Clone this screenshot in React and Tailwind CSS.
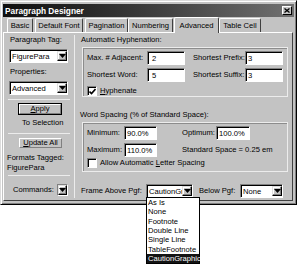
import React from "react";

const Arrow = () => (
  <svg width="7" height="4" viewBox="0 0 7 4" className="block">
    <path d="M0 0h7L3.5 4z" fill="#000" />
  </svg>
);

function DropBtn({ className = "" }) {
  return (
    <div
      className={`flex items-center justify-center bg-[#c3c3c3] border border-t-[#dfdfdf] border-l-[#dfdfdf] border-r-black border-b-black shadow-[inset_-1px_-1px_0_#808080,inset_1px_1px_0_#fff] ${className}`}
    >
      <Arrow />
    </div>
  );
}

function Select({ value, className = "" }) {
  return (
    <div
      className={`flex h-[14px] shrink-0 bg-white border border-t-[#808080] border-l-[#808080] border-r-white border-b-white shadow-[inset_1px_1px_0_#000] ${className}`}
    >
      <div className="flex-1 overflow-hidden whitespace-nowrap pl-[2px] pt-[1px] leading-[11px]">{value}</div>
      <DropBtn className="w-[10px] h-[10px] mt-[1px]" />
    </div>
  );
}

function Input({ value, className = "" }) {
  return (
    <div
      className={`h-[14px] shrink-0 bg-white border border-t-[#808080] border-l-[#808080] border-r-white border-b-white shadow-[inset_1px_1px_0_#000] pt-[1px] leading-[11px] ${className}`}
    >
      {value}
    </div>
  );
}

function Check({ checked }) {
  return (
    <div className="w-[10px] h-[10px] shrink-0 bg-white border border-t-[#808080] border-l-[#808080] border-r-white border-b-white shadow-[inset_1px_1px_0_#000] flex items-center justify-center">
      {checked && (
        <svg width="7" height="7" viewBox="0 0 7 7" className="block">
          <path d="M0.5 3.5L2.5 5.5L6.5 1" stroke="#000" strokeWidth="1.6" fill="none" />
        </svg>
      )}
    </div>
  );
}

function Tab({ label, className = "", active }) {
  return (
    <div
      className={`shrink-0 flex items-center justify-center border-t border-l border-r border-t-white border-l-white border-r-[#404040] rounded-t-[2px] leading-[10px] ${
        active ? "h-[16px] relative z-10 -mb-px bg-[#c3c3c3]" : "h-[14px] bg-[#c3c3c3]"
      } ${className}`}
    >
      {label}
    </div>
  );
}

function Sep({ className = "" }) {
  return <div className={`h-px bg-[#ececec] shrink-0 ${className}`} />;
}

function Button({ children, className = "" }) {
  return (
    <div className={`flex items-center justify-center bg-[#c3c3c3] border border-black shrink-0 ${className}`}>
      <div className="w-full h-full flex items-center justify-center border border-t-white border-l-white border-r-[#808080] border-b-[#808080] leading-[10px]">
        {children}
      </div>
    </div>
  );
}

export default function App() {
  return (
    <div className="relative w-[300px] h-[266px] bg-white text-black text-[7.6px] leading-[10px] font-['Liberation_Sans',Arial,sans-serif]">
      <div className="w-[297px] h-[205px] bg-[#c3c3c3] border border-t-[#dcdcdc] border-l-[#dcdcdc] border-r-black border-b-black shadow-[inset_1px_1px_0_#fff,inset_-1px_-1px_0_#808080] px-[2px] pt-[3px] pb-[3px] flex flex-col">
        {/* Title bar */}
        <div className="h-[13px] shrink-0 bg-gradient-to-r from-[#0f0f0f] to-[#717171] flex items-center justify-between pl-[2px] pr-[2px]">
          <span className="text-white font-bold text-[8.3px] leading-[10px]">Paragraph Designer</span>
          <div className="w-[10px] h-[9px] bg-[#c3c3c3] border border-t-white border-l-white border-r-black border-b-black flex items-center justify-center">
            <svg width="6" height="5" viewBox="0 0 6 5" className="block">
              <path d="M0.5 0.5L5.5 4.5M5.5 0.5L0.5 4.5" stroke="#000" strokeWidth="1.3" />
            </svg>
          </div>
        </div>

        {/* Tabs */}
        <div className="flex items-end h-[15px] pl-[4px] shrink-0">
          <Tab label="Basic" className="w-[26px]" />
          <Tab label="Default Font" className="w-[48px] ml-[2px]" />
          <Tab label="Pagination" className="w-[43px] ml-[2px]" />
          <Tab label="Numbering" className="w-[45px]" />
          <Tab label="Advanced" className="w-[45px] ml-[1px]" active />
          <Tab label="Table Cell" className="w-[42px]" />
        </div>

        {/* Panel */}
        <div className="flex-1 flex mr-[1px] border border-t-white border-l-white border-r-[#404040] border-b-[#404040] min-h-0">
          {/* Left column */}
          <div className="w-[70px] shrink-0 flex flex-col">
            <div className="mt-[2px] pl-[6px] h-[10px]">Paragraph Tag:</div>
            <Select value="FigurePara" className="mt-[4px] ml-[5px] w-[59px]" />
            <div className="mt-[4px] pl-[6px] h-[10px]">Properties:</div>
            <Select value="Advanced" className="mt-[4px] ml-[5px] w-[59px]" />
            <Sep className="mt-[4px] ml-[4px] w-[62px]" />
            <Button className="mt-[3px] ml-[14px] w-[44px] h-[12px]">
              <span>
                <span className="underline">A</span>pply
              </span>
            </Button>
            <div className="mt-[3px] h-[10px] ml-[18px]">To Selection</div>
            <Sep className="mt-[5px] ml-[4px] w-[62px]" />
            <Button className="mt-[3px] ml-[14px] w-[45px] h-[12px] !border-[#c3c3c3]">
              <span>
                <span className="underline">U</span>pdate All
              </span>
            </Button>
            <div className="mt-[4px] h-[10px] ml-[3px]">Formats Tagged:</div>
            <div className="h-[10px] ml-[3px]">FigurePara</div>
            <Sep className="mt-[2px] ml-[4px] w-[62px]" />
            <div className="mt-[8px] flex items-center ml-[9px]">
              <span className="w-[44px]">Commands:</span>
              <div className="w-[11px] h-[12px] border border-t-[#808080] border-l-[#808080] border-r-white border-b-white">
                <DropBtn className="w-full h-full" />
              </div>
            </div>
          </div>

          {/* Divider */}
          <div className="w-px shrink-0 bg-[#ececec] my-[2px]" />

          {/* Right column */}
          <div className="flex-1 flex flex-col">
            <div className="mt-[2px] pl-[6px] h-[10px]">Automatic Hyphenation:</div>
            <div className="mt-[2px] ml-[7px] w-[206px] border border-[#ececec] shadow-[inset_1px_1px_0_#8c8c8c] pl-[4px] pt-[3px] flex flex-col">
              <div className="flex items-center h-[14px]">
                <span className="w-[60px] whitespace-nowrap">Max. # Adjacent:</span>
                <Input value="2" className="w-[38px] pl-[4px]" />
                <span className="w-[52px] ml-[8px] whitespace-nowrap">Shortest Prefix:</span>
                <Input value="3" className="w-[38px] pl-[2px]" />
              </div>
              <div className="flex items-center h-[14px] mt-[3px]">
                <span className="w-[60px] whitespace-nowrap">Shortest Word:</span>
                <Input value="5" className="w-[38px] pl-[4px]" />
                <span className="w-[52px] ml-[8px] whitespace-nowrap">Shortest Suffix:</span>
                <Input value="3" className="w-[38px] pl-[2px]" />
              </div>
              <div className="flex items-center h-[10px] mt-[4px]">
                <Check checked />
                <span className="ml-[3px]">
                  <span className="underline">H</span>yphenate
                </span>
              </div>
            </div>

            <div className="mt-[13px] pl-[5px] h-[10px]">Word Spacing (% of Standard Space):</div>
            <div className="mt-[2px] ml-[7px] w-[206px] border border-[#ececec] shadow-[inset_1px_1px_0_#8c8c8c] pl-[4px] pt-[3px] pb-[3px] flex flex-col">
              <div className="flex items-center h-[14px]">
                <span className="w-[37px]">Minimum:</span>
                <Input value="90.0%" className="w-[33px] pl-[2px]" />
                <span className="w-[34px] ml-[25px]">Optimum:</span>
                <Input value="100.0%" className="w-[34px] pl-[2px]" />
              </div>
              <div className="flex items-center h-[14px] mt-[3px]">
                <span className="w-[37px]">Maximum:</span>
                <Input value="110.0%" className="w-[33px] pl-[2px]" />
                <span className="ml-[25px] whitespace-nowrap">Standard Space = 0.25 em</span>
              </div>
              <div className="flex items-center h-[10px] mt-[1px]">
                <Check />
                <span className="ml-[3px] whitespace-nowrap">
                  Allow Automatic <span className="underline">L</span>etter Spacing
                </span>
              </div>
            </div>

            <div className="mt-[12px] flex items-center pl-[6px]">
              <span className="w-[65px] whitespace-nowrap">Frame Above Pgf:</span>
              <Select value="CautionGraphic" className="w-[47px]" />
              <span className="w-[41px] ml-[6px] whitespace-nowrap">Below Pgf:</span>
              <Select value="None" className="w-[43px]" />
            </div>
          </div>
        </div>
      </div>

      {/* Dropdown list */}
      <div className="absolute left-[146px] top-[197px] w-[54px] bg-white border border-black flex flex-col leading-[9px]">
        {["As Is", "None", "Footnote", "Double Line", "Single Line", "TableFootnote"].map((t) => (
          <div key={t} className="h-[9.33px] px-[1px] whitespace-nowrap">
            {t}
          </div>
        ))}
        <div className="h-[9.33px] px-[1px] whitespace-nowrap bg-[#141414] text-white">CautionGraphic</div>
      </div>
    </div>
  );
}
